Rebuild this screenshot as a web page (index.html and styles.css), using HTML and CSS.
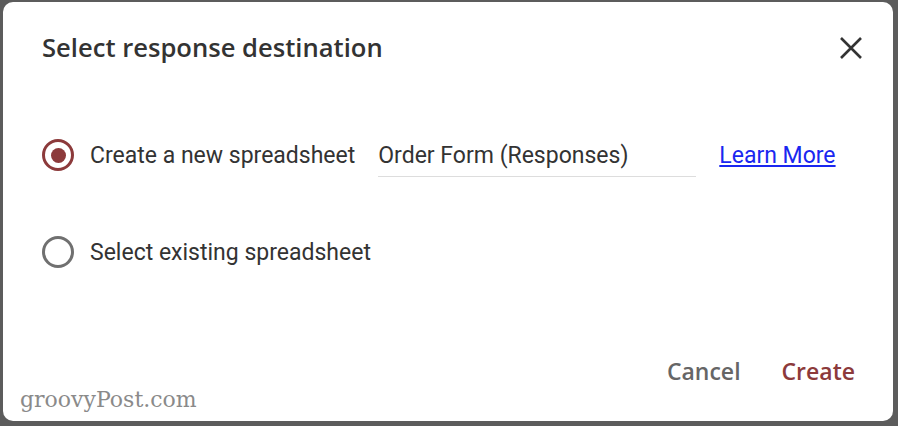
FILE: index.html
```html
<!DOCTYPE html>
<html lang="en">
<head>
  <meta charset="UTF-8">
  <title>Select response destination</title>
  <link rel="stylesheet" href="styles.css">
</head>
<body>

  <div class="dialog">
    <div class="dialog-header">
      <h1 class="dialog-title">Select response destination</h1>
      <button class="close-btn" aria-label="Close">
        <svg width="24" height="24" viewBox="0 0 24 24">
          <path d="M2 2 L22 22 M22 2 L2 22" stroke="#333" stroke-width="2.6" fill="none"/>
        </svg>
      </button>
    </div>

    <div class="options">
      <label class="option">
        <span class="radio checked"><span class="dot"></span></span>
        <span class="option-text">Create a new spreadsheet</span>
        <span class="name-field">Order Form (Responses)</span>
        <a class="learn-more" href="#">Learn More</a>
      </label>

      <label class="option">
        <span class="radio"></span>
        <span class="option-text">Select existing spreadsheet</span>
      </label>
    </div>

    <div class="dialog-footer">
      <span class="watermark">groovyPost.com</span>
      <div class="actions">
        <button class="btn btn-cancel">Cancel</button>
        <button class="btn btn-create">Create</button>
      </div>
    </div>
  </div>

</body>
</html>
```

FILE: styles.css
```css
* {
  box-sizing: border-box;
}
body {
  margin: 0;
  background: #5c5c5c;
  padding: 2px 5px 5px 3px;
  font-family: Roboto, 'Liberation Sans', sans-serif;
  color: #333;
}

.dialog {
  background: #fff;
  border-radius: 10px;
  height: 419px;
  display: flex;
  flex-direction: column;
}

.dialog-header {
  display: flex;
  justify-content: space-between;
  align-items: center;
  padding: 28px 30px 0 39px;
}
.dialog-title {
  margin: 0;
  font-family: 'Open Sans', sans-serif;
  font-weight: 600;
  font-size: 25.6px;
  color: #333;
}
.close-btn {
  background: none;
  border: none;
  padding: 0;
  width: 24px;
  height: 24px;
  cursor: pointer;
}

.options {
  display: flex;
  flex-direction: column;
  gap: 61px;
  padding: 72px 0 0 39px;
}
.option {
  display: flex;
  align-items: center;
  height: 36px;
}
.radio {
  width: 32px;
  height: 32px;
  border-radius: 50%;
  border: 3px solid #707070;
  display: flex;
  align-items: center;
  justify-content: center;
  margin-right: 16px;
}
.radio.checked {
  border-color: #8c3a3b;
}
.radio .dot {
  width: 15px;
  height: 15px;
  border-radius: 50%;
  background: #8c3a3b;
}
.option-text {
  font-size: 23px;
  color: #333;
  margin-right: 23px;
}
.name-field {
  font-size: 23px;
  color: #333;
  width: 318px;
  padding: 0 0 7px;
  border-bottom: 1px solid #ddd;
  margin-right: 23px;
  margin-top: 8px;
}
.learn-more {
  font-size: 23px;
  color: #1a27f0;
  text-decoration: underline;
}

.dialog-footer {
  margin-top: auto;
  display: flex;
  justify-content: space-between;
  align-items: flex-end;
  padding: 0 38px 9px 17px;
}
.watermark {
  font-family: 'DejaVu Serif', 'Liberation Serif', serif;
  font-size: 22px;
  color: #8a8a8a;
}
.actions {
  display: flex;
  gap: 41px;
  margin-bottom: 25px;
}
.btn {
  background: none;
  border: none;
  padding: 0;
  font-family: 'Open Sans', sans-serif;
  font-weight: 600;
  font-size: 23px;
  cursor: pointer;
}
.btn-cancel {
  color: #666;
}
.btn-create {
  color: #8c3a3b;
}
```
